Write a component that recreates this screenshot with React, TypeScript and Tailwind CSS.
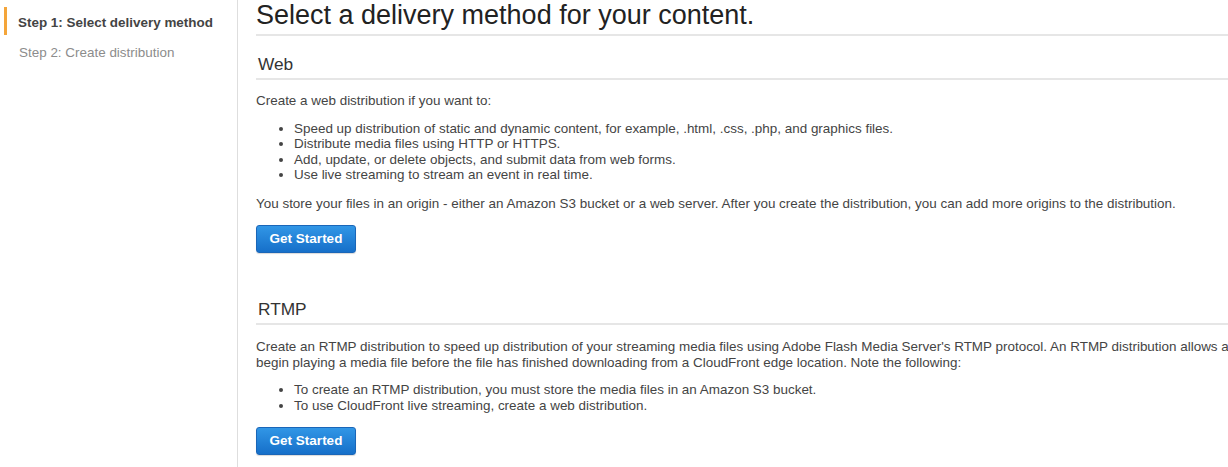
const webPoints = [
  "Speed up distribution of static and dynamic content, for example, .html, .css, .php, and graphics files.",
  "Distribute media files using HTTP or HTTPS.",
  "Add, update, or delete objects, and submit data from web forms.",
  "Use live streaming to stream an event in real time.",
];

const rtmpPoints = [
  "To create an RTMP distribution, you must store the media files in an Amazon S3 bucket.",
  "To use CloudFront live streaming, create a web distribution.",
];

const GetStarted = ({ className = "" }: { className?: string }) => (
  <button
    type="button"
    className={`block h-[28px] w-[100px] rounded-[3px] border border-[#1a66b8] bg-gradient-to-b from-[#3196e6] to-[#166fc9] text-[13.5px] font-bold text-white shadow-[0_1px_1px_rgba(0,0,0,0.15)] ${className}`}
  >
    Get Started
  </button>
);

const Section = ({ title, className = "" }: { title: string; className?: string }) => (
  <h2
    className={`border-b-2 border-[#e6e6e6] pb-[4px] pl-[2px] text-[17.3px] leading-[20px] text-[#333] ${className}`}
  >
    {title}
  </h2>
);

export default function App() {
  return (
    <div className="flex h-[467px] w-[1228px] overflow-hidden bg-white font-['Liberation_Sans',Arial,sans-serif] text-[13.45px] leading-[15.5px] text-[#444]">
      <aside className="w-[238px] shrink-0 border-r border-[#dedede] pt-[7px]">
        <div className="ml-[4px] flex h-[28px] items-center border-l-[3px] border-[#f4a53a] pl-[11px] pt-[3px] font-bold text-[#444]">
          Step 1: Select delivery method
        </div>
        <div className="mt-[3px] flex h-[28px] items-center pl-[19px] pt-[2px] text-[#8c8c8c]">
          Step 2: Create distribution
        </div>
      </aside>

      <main className="w-[1080px] shrink-0 pl-[18px]">
        <h1 className="border-b-2 border-[#e6e6e6] pb-[4px] text-[27px] leading-[30px] text-[#222]">
          Select a delivery method for your content.
        </h1>

        <Section title="Web" className="mt-[18px]" />
        <p className="mt-[13px]">Create a web distribution if you want to:</p>
        <ul className="mt-[12px] list-disc pl-[38px]">
          {webPoints.map((p) => (
            <li key={p}>{p}</li>
          ))}
        </ul>
        <p className="mt-[13px]">
          You store your files in an origin - either an Amazon S3 bucket or a web server. After you create the
          distribution, you can add more origins to the distribution.
        </p>
        <GetStarted className="mt-[14px]" />

        <Section title="RTMP" className="mt-[46px]" />
        <p className="mt-[14px]">
          Create an RTMP distribution to speed up distribution of your streaming media files using Adobe Flash Media
          Server's RTMP protocol. An RTMP distribution allows an end user to begin playing a media file before the file
          has finished downloading from a CloudFront edge location. Note the following:
        </p>
        <ul className="mt-[12px] list-disc pl-[38px]">
          {rtmpPoints.map((p) => (
            <li key={p}>{p}</li>
          ))}
        </ul>
        <GetStarted className="mt-[14px]" />
      </main>
    </div>
  );
}
